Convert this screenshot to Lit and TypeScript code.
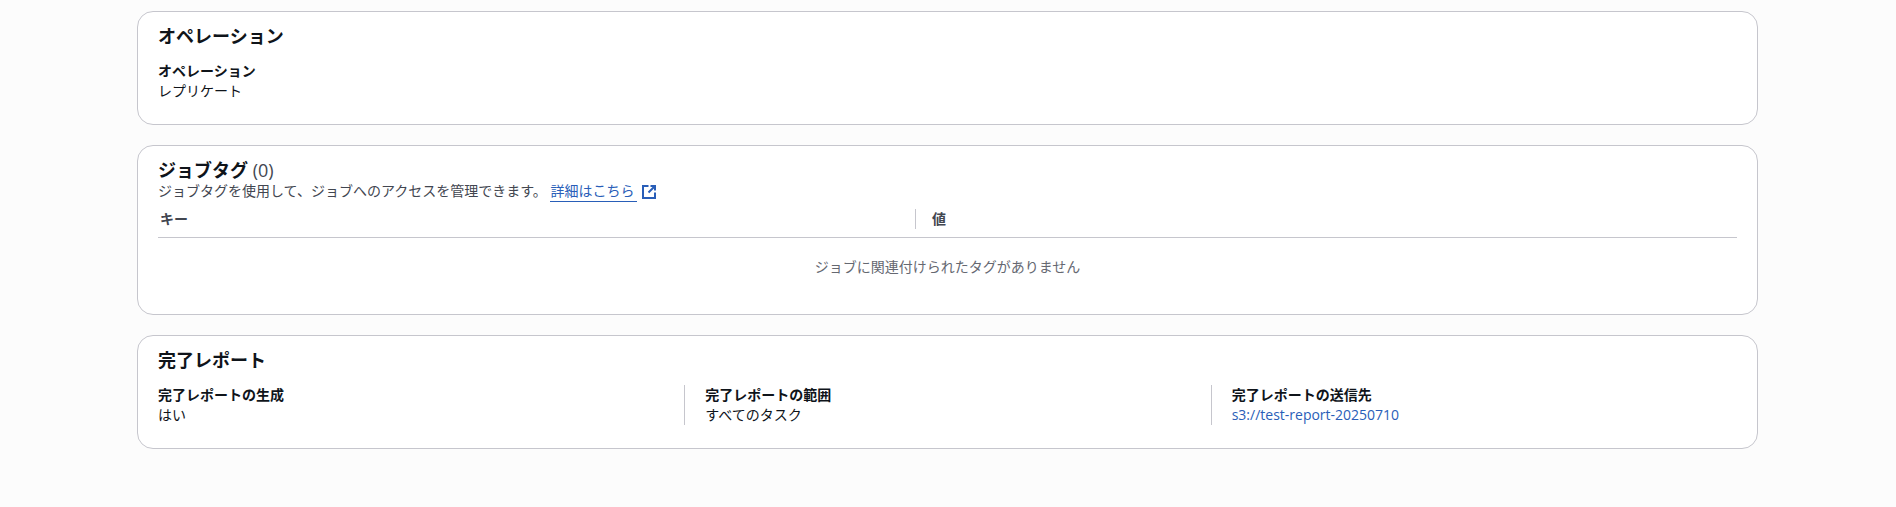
import { LitElement, html, css } from "lit";
import { customElement } from "lit/decorators.js";

@customElement("app-root")
export class AppRoot extends LitElement {
  static styles = css`
    :host {
      display: block;
      min-height: 507px;
      box-sizing: border-box;
      background: #fcfcfc;
      padding: 11px 138px 0 137px;
      font-family: "Open Sans", "Noto Sans CJK JP", sans-serif;
      font-size: 14px;
      line-height: 20px;
      color: #0f141a;
    }
    .stack { display: flex; flex-direction: column; gap: 20px; }
    .card {
      background: #fff;
      border: 1px solid #c6c6cd;
      border-radius: 16px;
      padding: 12px 20px 0;
      box-sizing: border-box;
    }
    .c1, .c3 { height: 114px; }
    .c2 { height: 170px; }
    h2 { margin: 0; font-size: 18px; line-height: 24px; font-weight: 700; }
    .count { font-weight: 400; color: #424650; }
    .desc { color: #424650; font-size: 14px; line-height: 20px; margin-top: -1px; }
    a { color: #295eb8; text-decoration: none; }
    .ext { display: inline-flex; align-items: center; gap: 4px; vertical-align: top; }
    .ext span { border-bottom: 1px solid #295eb8; line-height: 20px; padding-right: 3px; }
    .ext svg { display: block; }
    .label { font-weight: 700; }
    .kv { margin-top: 13px; }
    .thead { display: grid; grid-template-columns: 757px 1fr; border-bottom: 1px solid #c6c6cd; margin-top: 7px; height: 29px; box-sizing: border-box; font-weight: 700; color: #424650; }
    .th { padding-left: 2px; height: 20px; }
    .th + .th { border-left: 1px solid #c6c6cd; padding-left: 16px; }
    .empty { text-align: center; color: #656871; margin-top: 19px; }
    .cols { display: grid; grid-template-columns: repeat(3, 1fr); margin-top: 13px; }
    .col { height: 40px; }
    .col + .col { border-left: 1px solid #c6c6cd; padding-left: 20px; }
  `;

  render() {
    return html`
      <div class="stack">
        <section class="card c1">
          <h2>オペレーション</h2>
          <div class="kv">
            <div class="label">オペレーション</div>
            <div>レプリケート</div>
          </div>
        </section>
        <section class="card c2">
          <h2>ジョブタグ <span class="count">(0)</span></h2>
          <div class="desc">
            ジョブタグを使用して、ジョブへのアクセスを管理できます。
            <a class="ext" href="#"><span>詳細はこちら</span>
              <svg width="16" height="16" viewBox="0 0 16 16" fill="none" stroke="#295eb8" stroke-width="2">
                <path d="M14 8.5V14H2V2h5.5" />
                <path d="M9.5 2H14v4.5M14 2 7.5 8.5" />
              </svg>
            </a>
          </div>
          <div class="thead">
            <div class="th">キー</div>
            <div class="th">値</div>
          </div>
          <div class="empty">ジョブに関連付けられたタグがありません</div>
        </section>
        <section class="card c3">
          <h2>完了レポート</h2>
          <div class="cols">
            <div class="col"><div class="label">完了レポートの生成</div><div>はい</div></div>
            <div class="col"><div class="label">完了レポートの範囲</div><div>すべてのタスク</div></div>
            <div class="col"><div class="label">完了レポートの送信先</div><div><a href="#">s3://test-report-20250710</a></div></div>
          </div>
        </section>
      </div>
    `;
  }
}
